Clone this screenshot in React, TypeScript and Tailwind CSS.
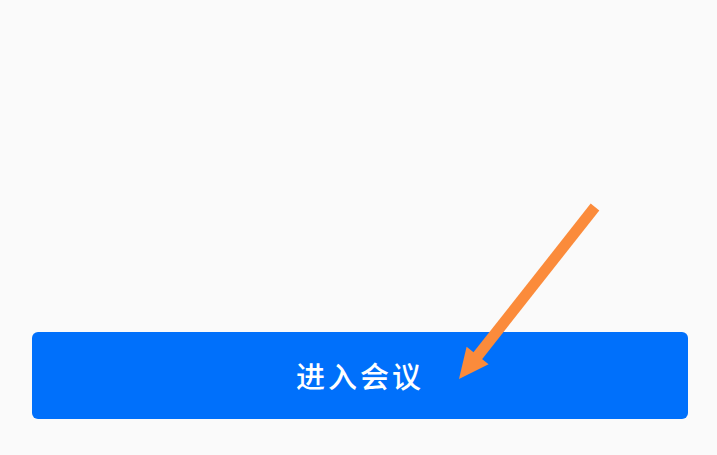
import React from 'react';

export default function App() {
  return (
    <div className="relative w-[717px] h-[455px] bg-[#fafafa] overflow-hidden">
      <div className="pt-[332px] pl-[32px] pr-[29px]">
        <button className="w-full h-[87px] rounded-[6px] bg-[#0070fb] flex items-center justify-center text-white text-[29px] font-medium tracking-[3px] font-['Noto_Sans_CJK_SC',sans-serif]">
          进入会议
        </button>
      </div>

      {/* Arrow pointing at the button */}
      <svg className="absolute inset-0 pointer-events-none" width="717" height="455" viewBox="0 0 717 455">
        <line x1="595" y1="207" x2="476" y2="358" stroke="#fb8b3b" strokeWidth="11" />
        <polygon points="459,379 466.6,346.8 488.6,364.2" fill="#fb8b3b" />
      </svg>
    </div>
  );
}
